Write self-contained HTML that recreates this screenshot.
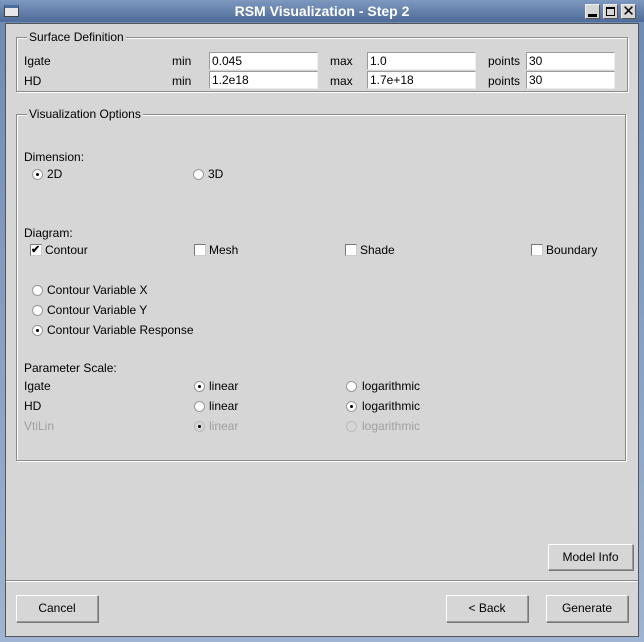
<!DOCTYPE html>
<html><head><style>
*{margin:0;padding:0;box-sizing:border-box}
body{width:644px;height:642px;background:#000;position:relative;overflow:hidden;font-family:"Liberation Sans",sans-serif;font-size:12px;color:#000}
.a{position:absolute}
.win{left:0;top:0;width:644px;height:642px;background:linear-gradient(#6d8ab4,#9fb4d2);}
.title{left:0;top:0;width:644px;height:22px;background:linear-gradient(#7e98bf,#4e6c99);color:#fff;font-weight:bold;font-size:14px;text-align:center;line-height:22px}
.body{left:5px;top:23px;width:634px;height:614px;background:#d6d6d6;border:1px solid #555}
.grp{border:1px solid #8a8a8a;box-shadow:1px 1px 0 #fff inset,1px 1px 0 #fff}
.lg{background:#d6d6d6;padding:0 2px;line-height:14px}
.tf{background:#fff;border:1px solid #9a9a9a;border-right-color:#eee;border-bottom-color:#eee;height:18px;line-height:16px;padding-left:2px}
.rb{width:11px;height:11px;border-radius:50%;background:#fff;border:1px solid #999}
.rb.on::after{content:"";position:absolute;left:3px;top:3px;width:3px;height:3px;background:#000;border-radius:50%}
.dis{color:#a0a0a0}
.cb{width:12px;height:12px;background:#fff;border:1px solid #777;border-right-color:#ccc;border-bottom-color:#ccc}
.btn{background:#d6d6d6;border:1px solid #999;border-top-color:#fff;border-left-color:#fff;box-shadow:1px 1px 0 #777;text-align:center;line-height:24px}
.wb{top:4px;width:15px;height:15px;background:#d6d6d6;border:1px solid #eee;border-right-color:#555;border-bottom-color:#555}
</style></head><body>
<div class="a win"></div>
<div class="a title">RSM Visualization - Step 2</div>
<div class="a" style="left:4px;top:5px;width:15px;height:12px;background:#e8e8e8;border:1px solid #444;border-top:3px solid #4d6fa0"></div>
<div class="a wb" style="left:585px"><div class="a" style="left:2px;top:9px;width:9px;height:3px;background:#000"></div></div>
<div class="a wb" style="left:603px"><div class="a" style="left:2px;top:2px;width:9px;height:9px;border:1px solid #000;border-top-width:2px"></div></div>
<div class="a wb" style="left:621px;font-size:15px;line-height:13px;text-align:center">✕</div>
<div class="a body"></div>

<div class="a grp" style="left:16px;top:37px;width:612px;height:55px"></div>
<div class="a lg" style="left:27px;top:30px">Surface Definition</div>
<div class="a" style="left:24px;top:54px">Igate</div>
<div class="a" style="left:24px;top:74px">HD</div>
<div class="a" style="left:172px;top:54px">min</div><div class="a" style="left:172px;top:74px">min</div>
<div class="a" style="left:330px;top:54px">max</div><div class="a" style="left:330px;top:74px">max</div>
<div class="a" style="left:488px;top:54px">points</div><div class="a" style="left:488px;top:74px">points</div>
<div class="a tf" style="left:209px;top:52px;width:109px">0.045</div>
<div class="a tf" style="left:209px;top:71px;width:109px">1.2e18</div>
<div class="a tf" style="left:367px;top:52px;width:109px">1.0</div>
<div class="a tf" style="left:367px;top:71px;width:109px">1.7e+18</div>
<div class="a tf" style="left:526px;top:52px;width:89px">30</div>
<div class="a tf" style="left:526px;top:71px;width:89px">30</div>

<div class="a grp" style="left:16px;top:114px;width:610px;height:347px"></div>
<div class="a lg" style="left:27px;top:107px">Visualization Options</div>
<div class="a" style="left:24px;top:150px">Dimension:</div>
<div class="a rb on" style="left:32px;top:169px"></div><div class="a" style="left:47px;top:167px">2D</div>
<div class="a rb" style="left:193px;top:169px"></div><div class="a" style="left:208px;top:167px">3D</div>
<div class="a" style="left:24px;top:226px">Diagram:</div>
<div class="a cb" style="left:30px;top:244px;font-size:11px;line-height:10px;font-weight:bold">✔</div><div class="a" style="left:45px;top:243px">Contour</div>
<div class="a cb" style="left:194px;top:244px"></div><div class="a" style="left:209px;top:243px">Mesh</div>
<div class="a cb" style="left:345px;top:244px"></div><div class="a" style="left:360px;top:243px">Shade</div>
<div class="a cb" style="left:531px;top:244px"></div><div class="a" style="left:546px;top:243px">Boundary</div>
<div class="a rb" style="left:32px;top:285px"></div><div class="a" style="left:47px;top:283px">Contour Variable X</div>
<div class="a rb" style="left:32px;top:305px"></div><div class="a" style="left:47px;top:303px">Contour Variable Y</div>
<div class="a rb on" style="left:32px;top:325px"></div><div class="a" style="left:47px;top:323px">Contour Variable Response</div>
<div class="a" style="left:24px;top:361px">Parameter Scale:</div>
<div class="a" style="left:24px;top:379px">Igate</div>
<div class="a rb on" style="left:194px;top:381px"></div><div class="a" style="left:209px;top:379px">linear</div>
<div class="a rb" style="left:346px;top:381px"></div><div class="a" style="left:362px;top:379px">logarithmic</div>
<div class="a" style="left:24px;top:399px">HD</div>
<div class="a rb" style="left:194px;top:401px"></div><div class="a" style="left:209px;top:399px">linear</div>
<div class="a rb on" style="left:346px;top:401px"></div><div class="a" style="left:362px;top:399px">logarithmic</div>
<div class="a dis" style="left:24px;top:419px">VtiLin</div>
<div class="a rb on" style="left:194px;top:421px;background:#d6d6d6;border-color:#bbb"></div><div class="a dis" style="left:209px;top:419px">linear</div>
<div class="a rb" style="left:346px;top:421px;background:#d6d6d6;border-color:#bbb"></div><div class="a dis" style="left:362px;top:419px">logarithmic</div>

<div class="a btn" style="left:548px;top:544px;width:85px;height:26px">Model Info</div>
<div class="a" style="left:6px;top:580px;width:632px;height:2px;border-top:1px solid #8a8a8a;border-bottom:1px solid #fff"></div>
<div class="a btn" style="left:16px;top:595px;width:82px;height:27px">Cancel</div>
<div class="a btn" style="left:446px;top:595px;width:82px;height:27px">&lt; Back</div>
<div class="a btn" style="left:546px;top:595px;width:82px;height:27px">Generate</div>
</body></html>
